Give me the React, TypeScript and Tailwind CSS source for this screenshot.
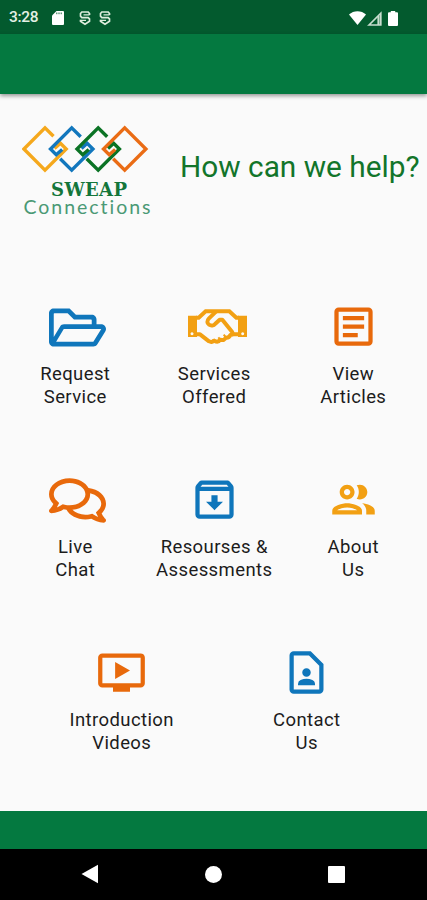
import type { ReactNode } from 'react';
import { FaRegComments, FaRegFolderOpen } from 'react-icons/fa';
import {
  MdOndemandVideo,
  MdOutlineArchive,
  MdOutlineArticle,
  MdOutlineContactPage,
  MdOutlineGroup,
} from 'react-icons/md';

type MenuItem = {
  lines: [string, string];
  icon: ReactNode;
};

const HandshakeIcon = () => (
  <svg viewBox="0 0 177 105" className="ml-[6px] h-[35px] w-[59px]" fill="none" stroke="#f2a013" strokeWidth="12">
    <path
      d="M0 20h27v64H0zM12 70a4.500 4.500 0 1 0 .1 0zM150 20h27v64h-27zM164 70a4.500 4.500 0 1 0 .1 0z"
      fill="#f2a013"
      fillRule="evenodd"
      stroke="none"
    />
    <path d="M24 26h8L53 6.500h71L145 26h8" />
    <path d="M24 76h12l27 21c6 3 12 2 16-2 7 4 14 3 18-3 8 3 14 0 16-6 8 1 12-3 14-8l9-2h17" strokeLinejoin="round" />
    <path d="M84 8L63 28c-7 7-6 15 0 19s14 3 19-3l13-12h8l29 36c3 4 2 7-1 9" strokeLinejoin="round" />
    <path d="M77 97l-5-5M97 92l-6-7M114 85l-7-8" strokeWidth="6" />
  </svg>
);

const menuRows: MenuItem[][] = [
  [
    {
      lines: ['Request', 'Service'],
      icon: <FaRegFolderOpen className="ml-[5px] mt-[3px] h-[51px] w-[57px] text-[#0f76bb]" />,
    },
    {
      lines: ['Services', 'Offered'],
      icon: <HandshakeIcon />,
    },
    {
      lines: ['View', 'Articles'],
      icon: <MdOutlineArticle className="size-[51px] text-[#e8690b]" />,
    },
  ],
  [
    {
      lines: ['Live', 'Chat'],
      icon: <FaRegComments className="ml-[5px] mt-[3px] h-[51px] w-[57px] text-[#e8690b]" />,
    },
    {
      lines: ['Resourses &', 'Assessments'],
      icon: <MdOutlineArchive className="size-[51px] text-[#0f76bb]" />,
    },
    {
      lines: ['About', 'Us'],
      icon: <MdOutlineGroup className="size-[51px] text-[#f2a013]" />,
    },
  ],
  [
    {
      lines: ['Introduction', 'Videos'],
      icon: <MdOndemandVideo className="size-[51px] text-[#e8690b]" />,
    },
    {
      lines: ['Contact', 'Us'],
      icon: <MdOutlineContactPage className="size-[51px] text-[#0f76bb]" />,
    },
  ],
];

const DebugIcon = () => (
  <svg viewBox="0 0 12 16" className="h-4 w-3" fill="none" stroke="#dcecdc" strokeWidth="1.700">
    <path d="M10.500 5V3.500L9.200 2H2.800L1.500 3.500v2.700L2.800 7.600h6.400l1.300 1.300v2.400L6 14.300l-4.500-3v-1.500" />
    <path d="M1.500 10.300h5.500M4.500 4.900h6" strokeWidth="1.300" />
  </svg>
);

const StatusBar = () => (
  <div className="flex h-[34px] items-center bg-[#035a2e] pl-[9px] pr-[29px] pt-[2px]">
    <span className="w-[43px] text-[15.500px] font-medium leading-none tracking-[-0.3px] text-[#e4f0e4]">3:28</span>
    <svg viewBox="0 0 12 14" className="h-[14px] w-3" fill="#fff">
      <path d="M4.500 0H11a1 1 0 0 1 1 1v12a1 1 0 0 1-1 1H1a1 1 0 0 1-1-1V4.500z" />
      <path d="M4.800 1.500v1.700M7 1.500v1.700M9.200 1.500v1.700" stroke="#035a2e" strokeWidth=".9" />
    </svg>
    <div className="ml-[15px] flex gap-2">
      <DebugIcon />
      <DebugIcon />
    </div>
    <div className="ml-auto flex items-center">
      <svg viewBox="0 0 17 14" className="h-[14px] w-[17px]" fill="#fff">
        <path d="M0 3.500C4.500-1 12.500-1 17 3.500L8.500 14z" />
      </svg>
      <svg viewBox="0 0 15 15" className="ml-[1px] h-[15px] w-[15px]" fill="none" stroke="#c9ddcf" strokeWidth="1.700">
        <path d="M2 14L13.800 2.200V14z" />
        <path d="M11.500 5v9" strokeWidth="2.200" />
      </svg>
      <svg viewBox="0 0 10 15" className="ml-[6px] h-[15px] w-[10px]" fill="#fff">
        <path d="M2.800 0h4.400v1.300H9a1 1 0 0 1 1 1V14a1 1 0 0 1-1 1H1a1 1 0 0 1-1-1V2.300a1 1 0 0 1 1-1h1.800z" />
      </svg>
    </div>
  </div>
);

const Logo = () => (
  <svg viewBox="0 0 130 94" className="h-[94px] w-[130px] shrink-0">
    <g fill="none" strokeWidth="3.400">
      {/* Linked diamonds, each one open where its neighbour passes over */}
      <path d="M31.500 12.300L23 3.800L1.900 25L23 46.200L44.200 25L38.500 19.300L32.500 24.500" stroke="#f5a81c" />
      <path d="M58.700 12.800L49.700 3.800L28.500 25L34.200 30.700L40.200 25.500M38.200 34.700L49.700 46.200L70.900 25L65.200 19.300L59.500 24.500" stroke="#1277bd" />
      <path d="M85.200 12.800L76.200 3.800L55 25L60.700 30.700L66.700 25.500M64.700 34.700L76.200 46.200L97.400 25L91.700 19.300L86 24.500" stroke="#0b7325" />
      <path d="M91.200 34.700L102.700 46.200L123.900 25L102.700 3.800L81.500 25L87.200 30.700L93.200 25.500" stroke="#ea6c15" />
    </g>
    <text
      x="29"
      y="72"
      textLength="76"
      lengthAdjust="spacing"
      className="fill-[#14763a] font-['DejaVu_Serif',serif] text-[18px] font-bold"
    >
      SWEAP
    </text>
    <text
      x="1.500"
      y="89.500"
      textLength="127"
      lengthAdjust="spacing"
      className="fill-[#4a9975] font-['Lato',sans-serif] text-[19.500px] font-normal [font-variant-ligatures:none]"
    >
      Connections
    </text>
  </svg>
);

const MenuTile = ({ item, wide }: { item: MenuItem; wide: boolean }) => (
  <button className={`flex flex-col items-center ${wide ? 'w-[185px]' : 'w-[139px]'}`}>
    <span className="flex h-[52px] items-center justify-center">{item.icon}</span>
    <span className="mt-[10.500px] text-center text-[18.500px] leading-[23px] tracking-[0.4px] text-[#1c1c1c]">
      {item.lines[0]}
      <br />
      {item.lines[1]}
    </span>
  </button>
);

const App = () => {
  return (
    <div className="flex h-[900px] w-[427px] flex-col overflow-hidden bg-[#fafafa] font-['Roboto',sans-serif]">
      <StatusBar />
      <header className="z-10 h-[60px] shrink-0 bg-[#047940] shadow-[0_2px_4px_rgba(0,0,0,0.4)]" />

      <main className="flex-1">
        <div className="flex items-start pl-[22px] pt-[30px]">
          <Logo />
          <h1 className="ml-[28px] mt-[25px] whitespace-nowrap text-[29.800px] leading-[36px] text-[#12752a]">
            How can we help?
          </h1>
        </div>

        <div className="mt-[82px] flex flex-col gap-[64.900px] pl-[1.500px]">
          {menuRows.map((row, index) => (
            <div key={index} className="flex justify-center">
              {row.map((item) => (
                <MenuTile key={item.lines.join(' ')} item={item} wide={row.length === 2} />
              ))}
            </div>
          ))}
        </div>
      </main>

      <footer className="h-[38px] shrink-0 bg-[#047940]" />
      <nav className="flex h-[51px] shrink-0 items-center justify-between bg-black pb-px pl-[81px] pr-[82px]">
        <svg viewBox="0 0 18 20" className="h-5 w-[18px]" fill="#fff">
          <path d="M17 .8v18.400L.5 10z" />
        </svg>
        <span className="size-[17px] rounded-full bg-white" />
        <span className="size-[17px] rounded-[1px] bg-white" />
      </nav>
    </div>
  );
};

export default App;
